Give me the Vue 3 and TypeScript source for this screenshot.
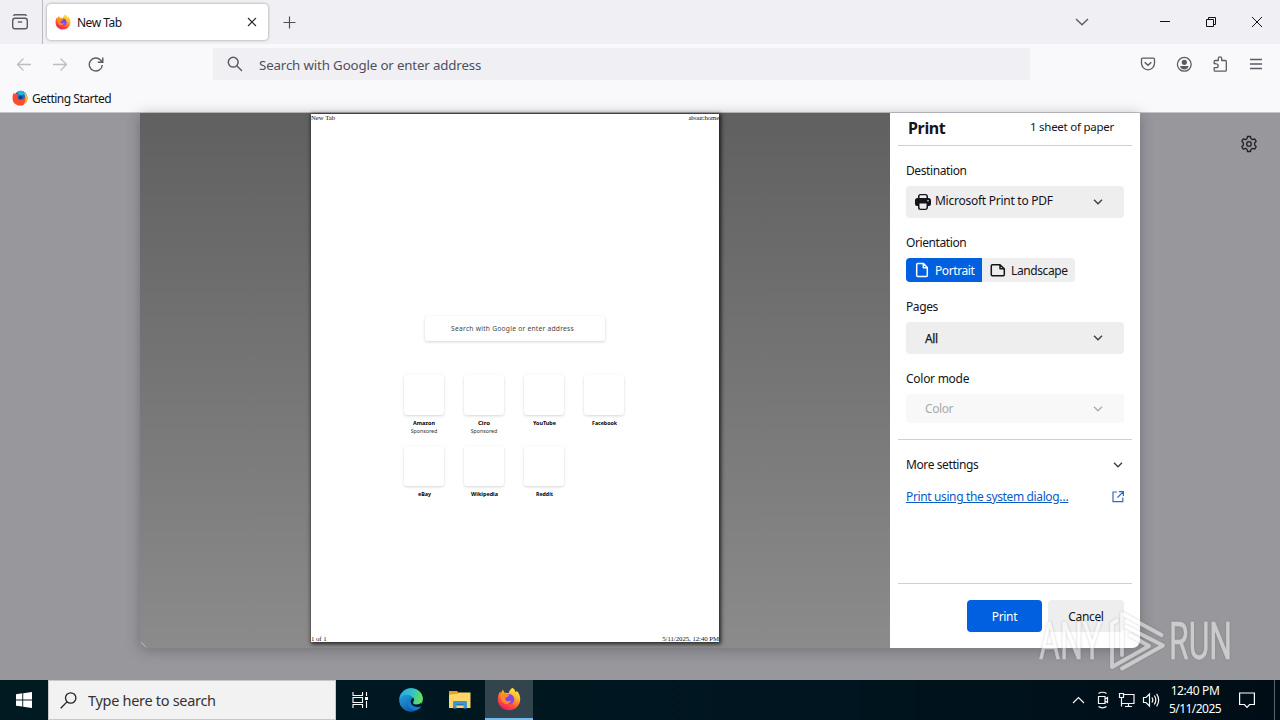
<script setup lang="ts">
interface Tile { name: string; sponsored?: boolean; w: number }

const tiles: Tile[] = [
  { name: 'Amazon', sponsored: true, w: 22 },
  { name: 'Ciro', sponsored: true, w: 12 },
  { name: 'YouTube', w: 23 },
  { name: 'Facebook', w: 25 },
  { name: 'eBay', w: 13 },
  { name: 'Wikipedia', w: 27 },
  { name: 'Reddit', w: 17 },
]
</script>

<template>
  <div class="screen">
    <svg class="defs" width="0" height="0" aria-hidden="true">
      <defs>
        <linearGradient id="ffBody" x1="0.8" y1="0" x2="0.25" y2="1">
          <stop offset="0" stop-color="#fff04a" />
          <stop offset="0.35" stop-color="#ffb428" />
          <stop offset="0.65" stop-color="#ff5634" />
          <stop offset="1" stop-color="#e8156a" />
        </linearGradient>
        <linearGradient id="edgeBlue" x1="0" y1="0" x2="0.6" y2="1">
          <stop offset="0" stop-color="#2bb3e8" />
          <stop offset="1" stop-color="#0c59a4" />
        </linearGradient>
        <linearGradient id="edgeTop" x1="0" y1="0.3" x2="1" y2="0.5">
          <stop offset="0" stop-color="#27a9e3" />
          <stop offset="0.55" stop-color="#36c5c0" />
          <stop offset="1" stop-color="#6be04f" />
        </linearGradient>
        <symbol id="firefox" viewBox="0 0 24 24">
          <path fill="url(#ffBody)" d="M15.3 0.8c2 1.1 2.9 2.9 3.3 4.5 0.8-0.3 1-1 1.1-1.6 2.400 2.300 3.600 5.400 3.500 8.800C23 18.600 18.200 23.300 12 23.300 5.600 23.300 0.800 18.500 0.800 12.300c0-3.300 1-5.800 2.600-7.800l0.500 2 1.800-4 1.900 3.200c1.400-0.200 2.700 0 3.900 0.600 0.700-2.200 1.900-4.100 3.800-5.500z" />
          <circle cx="12.300" cy="12.200" r="5" fill="#8147e6" />
          <path fill="#ff8a25" d="M3.400 8.200c2.400-1.800 5-2.100 7.600-0.700 1.500 0.700 1.300 1.500-0.300 2.200l-2.200 1c-0.500 1.200 0 2.500 1.200 3.200 1.700 1 3.300-0.200 4.700-0.300-0.900 2.200-3 3.600-5.400 3.300C5.400 16.400 3.100 13 3.400 8.200z" />
        </symbol>
        <symbol id="firefoxOld" viewBox="0 0 24 24">
          <circle cx="13" cy="11" r="9.800" fill="#1c6fc4" />
          <path fill="#22b8dd" d="M8 3c4-3 9-2 12 2l-5 3-5-1z" />
          <path fill="#ff4a2b" d="M3.200 3.600 C3.300 5 3.600 5.600 5 6 C7.500 5.600 9 6.500 9.400 7.600 L8 10.500 C8.500 15 12 16 15 14 C16 13.500 17 14 16.500 15 C19 13 20 10 20 8 L19 5 C22 7 23.300 10 23.200 13 C22.600 19.500 17.500 23.300 12 23.300 C5.500 23.300 0.800 18.500 0.800 12.300 C0.800 8.500 1.600 5.800 3.200 3.600Z" />
          <path fill="#ffc22e" d="M18 3.500c4 2.800 5.400 5.800 5.200 9.800-0.400 4.200-3 7.300-6.200 8.800C20 18 21 14 19.500 9z" />
          <circle cx="13" cy="11" r="2.800" fill="#173a75" />
        </symbol>
      </defs>
    </svg>

    <header class="tabs">
      <div class="view-btn">
        <svg width="18" height="18" viewBox="0 0 18 18" fill="none" stroke="#5b5b66" stroke-width="1.400">
          <path d="M4 1.700h10c.8 0 1.400.5 1.600 1.200" /><path d="M4 1.700c-.8 0-1.400.5-1.600 1.200" />
          <rect x="1.700" y="5.200" width="14.600" height="10.600" rx="2.200" /><path d="M6.800 9h4.400" />
        </svg>
      </div>
      <div class="tab">
        <svg class="fav" width="16" height="16"><use href="#firefox" /></svg>
        <span class="t tab-title">New Tab</span>
        <svg class="close" width="10" height="10" viewBox="0 0 10 10" stroke="#2a2a33" stroke-width="1.100"><path d="M1 1l8 8M9 1L1 9" /></svg>
      </div>
      <svg class="plus" width="13" height="13" viewBox="0 0 13 13" stroke="#4f4f59" stroke-width="1.200"><path d="M6.500 0.500v12M0.500 6.500h12" /></svg>
      <svg class="alltabs" width="14" height="8" viewBox="0 0 14 8" fill="none" stroke="#5b5b66" stroke-width="1.400"><path d="M1 1l6 5.700L13 1" /></svg>
      <svg class="winbtns" width="104" height="12" viewBox="0 0 104 12" fill="none" stroke="#111" stroke-width="1">
        <path d="M0 5.500h10" /><path d="M46.500 3.500h7v7h-7zM48.500 3.500v-2h7v7h-2" /><path d="M92 1l10 10M102 1l-10 10" />
      </svg>
    </header>

    <div class="nav">
      <svg class="arrow left" width="16" height="14" viewBox="0 0 16 14" fill="none" stroke="#bcbcc3" stroke-width="1.300"><path d="M15 7.500H1.500M7.500 1.500l-6 6 6 6" /></svg>
      <svg class="arrow" width="16" height="14" viewBox="0 0 16 14" fill="none" stroke="#bcbcc3" stroke-width="1.300"><path d="M1 7.500h13.500M8.500 1.500l6 6-6 6" /></svg>
      <svg class="reload" width="16" height="16" viewBox="0 0 16 16" fill="none" stroke="#5b5b66" stroke-width="1.400"><path d="M14.300 9A6.500 6.500 0 1 1 12.500 4L14.500 6M9.800 6.200h5V1.500" /></svg>
      <div class="urlbar">
        <svg width="16" height="16" viewBox="0 0 16 16" fill="none" stroke="#5b5b66" stroke-width="1.500"><circle cx="6.200" cy="6.200" r="4.900" /><path d="M9.800 9.800l5.200 5.200" /></svg>
        <span class="t">Search with Google or enter address</span>
      </div>
      <div class="tools">
        <svg width="16" height="16" viewBox="0 0 16 16" fill="none" stroke="#5b5b66" stroke-width="1.300"><path d="M2.800 2.200h10.400c.8 0 1.300.5 1.300 1.300v3.800a6.500 6.500 0 0 1-13 0V3.500c0-.8.500-1.300 1.300-1.300z" /><path d="M4.700 6.200L8 9.300l3.300-3.100" stroke-width="1.500" /></svg>
        <svg width="16" height="16" viewBox="0 0 16 16"><circle cx="8.300" cy="8.300" r="6.900" fill="none" stroke="#5b5b66" stroke-width="1.300" /><circle cx="8.300" cy="6.300" r="2.600" fill="#5b5b66" /><path d="M4.100 10h8.400c0 2.300-2 3.400-4.200 3.400S4.100 12.300 4.100 10z" fill="#5b5b66" /></svg>
        <svg width="16" height="16" viewBox="0 0 16 16" fill="none" stroke="#5b5b66" stroke-width="1.300" stroke-linejoin="round"><path d="M2.200 7.500V5.500q0-1 1-1h3.100V2.600a1.700 1.700 0 0 1 3.400 0v1.900h3.600q1 0 1 1v8.700q0 1-1 1H3.200q-1 0-1-1v-2.500h2.100a1.900 1.900 0 0 0 0-3.800z" /></svg>
        <svg width="16" height="16" viewBox="0 0 16 16" stroke="#5b5b66" stroke-width="1.300"><path d="M2 3.500h12M2 8h12M2 12.500h12" /></svg>
      </div>
    </div>

    <div class="bookmarks">
      <svg width="16" height="16"><use href="#firefoxOld" /></svg>
      <span class="t">Getting Started</span>
    </div>

    <main class="content">
      <section class="dialog">
        <div class="preview">
          <div class="sheet">
            <div class="sheet-row"><span>New Tab</span><span class="about">about:home</span></div>
            <div class="sheet-body">
              <div class="sheet-search"><span>Search with Google or enter address</span></div>
              <div class="tiles">
                <div v-for="tile in tiles" :key="tile.name" class="tile">
                  <div class="box"></div>
                  <svg class="label" :width="tile.w" height="8"><text x="0" y="6" :textLength="tile.w" lengthAdjust="spacingAndGlyphs">{{ tile.name }}</text></svg>
                  <span v-if="tile.sponsored" class="spons">Sponsored</span>
                </div>
              </div>
            </div>
            <div class="sheet-row foot"><span>1 of 1</span><span>5/11/2025, 12:40 PM</span></div>
          </div>
          <svg class="corner" width="8" height="8" viewBox="0 0 8 8" stroke="#bbb" stroke-width="1"><path d="M1 2l5 5" /></svg>
        </div>
        <aside class="panel">
          <div class="p-head"><h1>Print</h1><span class="t sheets">1 sheet of paper</span></div>
          <div class="p-body">
            <label class="t dest">Destination</label>
            <div class="select s1">
              <svg width="16" height="16" viewBox="0 0 16 16"><path fill="#15141a" d="M3 2.500C3 1.100 4.100 0 5.500 0h5C11.900 0 13 1.100 13 2.500V4h.5A2.500 2.500 0 0 1 16 6.500V10a2 2 0 0 1-2 2h-1v1.500c0 1.400-1.100 2.500-2.500 2.500h-5A2.500 2.500 0 0 1 3 13.500V12H2a2 2 0 0 1-2-2V6.500A2.500 2.500 0 0 1 2.500 4H3z" /><path fill="#eeeef0" d="M4.500 4V2.500q0-1.200 1.200-1.200h4.600q1.200 0 1.200 1.200V4zM4.500 9.500h7v4q0 1.200-1.200 1.200H5.700q-1.200 0-1.200-1.200z" /><circle cx="13" cy="6.700" r=".8" fill="#eee" /></svg>
              <span class="t">Microsoft Print to PDF</span>
              <svg class="chev" width="10" height="6" viewBox="0 0 10 6"><path d="M1 .8l4 4 4-4" /></svg>
            </div>
            <label class="t orient">Orientation</label>
            <div class="seg">
              <div class="on"><svg width="16" height="16" viewBox="0 0 16 16" fill="none" stroke="#fff" stroke-width="1.500" stroke-linejoin="round"><path d="M3.700 1.500h5.800l3.800 4v8c0 .7-.4 1-1 1H3.700c-.6 0-1-.3-1-1v-11c0-.7.4-1 1-1zM9.300 1.500V5.700h4" /></svg><span class="t">Portrait</span></div>
              <div class="off"><svg width="16" height="16" viewBox="0 0 16 16" fill="none" stroke="#15141a" stroke-width="1.500" stroke-linejoin="round"><path d="M2.300 2.700h7.700l4.300 4v6c0 .7-.4 1-1 1h-11c-.6 0-1-.3-1-1v-9c0-.7.400-1 1-1zM10 2.700V6.700h4.300" /></svg><span class="t">Landscape</span></div>
            </div>
            <label class="t pages">Pages</label>
            <div class="select s2"><span class="t">All</span><svg class="chev" width="10" height="6" viewBox="0 0 10 6"><path d="M1 .8l4 4 4-4" /></svg></div>
            <label class="t cmode">Color mode</label>
            <div class="select s3"><span class="t">Color</span><svg class="chev" width="10" height="6" viewBox="0 0 10 6"><path d="M1 .8l4 4 4-4" /></svg></div>
          </div>
          <div class="p-more">
            <div class="line"><span class="t more">More settings</span><svg class="chev" width="10" height="6" viewBox="0 0 10 6"><path d="M1 .8l4 4 4-4" /></svg></div>
            <div class="line link"><span class="t sys">Print using the system dialog…</span><svg width="12" height="12" viewBox="0 0 12 12" fill="none" stroke="#3568c0" stroke-width="1.200"><path d="M5 1H1v9.700h9.800V6.500M7 .6h4.400V5M11.200 .8L5.500 6.500" /></svg></div>
          </div>
          <div class="p-foot"><button class="primary"><span class="t">Print</span></button><button><span class="t">Cancel</span></button></div>
        </aside>
      </section>
      <svg class="gear" width="18" height="18" viewBox="0 0 18 18" fill="none" stroke="#202026" stroke-width="1.300" stroke-linejoin="round"><path d="M7.500 1.500h3l.5 2.200 1.500.9 2.200-.8 1.500 2.600L14.600 8v2l1.600 1.600-1.500 2.600-2.200-.8-1.500.9-.5 2.200h-3L7 14.300l-1.500-.9-2.200.8-1.500-2.600L3.400 10V8L1.800 6.400l1.500-2.600 2.200.8L7 3.700z" /><circle cx="9" cy="9" r="2.300" /></svg>
    </main>

    <svg class="watermark" width="230" height="72" viewBox="0 0 230 72">
      <g fill="#fff" stroke="#fff" stroke-width=".5">
        <text x="3" y="52" textLength="63" lengthAdjust="spacingAndGlyphs">ANY</text>
        <text x="133" y="52" textLength="63" lengthAdjust="spacingAndGlyphs">RUN</text>
      </g>
      <path fill="none" stroke="#fff" stroke-width="3.800" stroke-linejoin="round" stroke-linecap="round" d="M81 13.500l-5 3V60l37-21-19-11M86 48V6.500L125.500 28M86 61.500l41-23L90 19.500" />
    </svg>

    <footer class="taskbar">
      <div class="start"><svg width="16" height="16" viewBox="0 0 16 16" fill="#fff"><path d="M0 2.200l6.300-.9v6.200H0zM7.200 1.200L16 0v7.500H7.200zM0 8.400h6.300v6.200L0 13.700zM7.200 8.400H16V16l-8.800-1.300z" /></svg></div>
      <div class="search">
        <svg width="17" height="17" viewBox="0 0 17 17" fill="none" stroke="#222" stroke-width="1.300"><circle cx="10.700" cy="6" r="5.200" /><path d="M7 9.900L.7 16.300" /></svg>
        <span class="t">Type here to search</span>
      </div>
      <div class="app"><svg width="16" height="16" viewBox="0 0 16 16" fill="none" stroke="#fff" stroke-width="1.100"><path d="M1 0v3.500h9.500V0M1 5.500h9.500v5H1zM1 16v-3.500h9.500V16M14.500 0v4M14.500 9v7" /><path d="M13 5h3v3h-3z" fill="#fff" stroke="none" /></svg></div>
      <div class="app edge"><svg width="24" height="24" viewBox="0 0 24 24"><circle cx="12" cy="12" r="11.800" fill="url(#edgeBlue)" /><path fill="url(#edgeTop)" d="M.4 10.500C1.500 4.500 6.500.2 12 .2 18.700.2 23.800 5 23.800 10.500c0 4-3 6.200-6.300 6.200-2.800 0-4-1.200-3.500-2.200.7-1 .9-1.600.9-2.500C14.900 9.500 12 6.700 8 6.700c-3.300 0-6.200 1.500-7.600 3.800z" /><path fill="#001a22" d="M14.500 9.800c1 1.800.3 3.200-.5 4.600-.3 1.700 3.600 3.400 8 .8l1.500 2c-4 3.500-11 1.400-11.700-3.200-.2-2 1-3.500 2.700-4.200z" /><path fill="#147fd0" d="M8.500 12c-1 5 2.500 10 8 10 2.300 0 4.500-1.600 5.500-3.600-4 1.800-9.800.6-11.500-4-.5-1.500 0-3 .7-4.100-1.200 0-2.400.8-2.700 1.700z" /></svg></div>
      <div class="app folder"><svg width="22" height="20" viewBox="0 0 22 20"><path fill="#e9a11c" d="M0 1h8l2 2h11v3H0z" /><path fill="#ffd667" d="M0 4.500L8 4l2-1.500h11.500V18H0z" /><path fill="#3f93d2" d="M4 18.500v-6c0-1 .5-1.500 1.500-1.500h11c1 0 1.500.5 1.500 1.500v6h-3.500V15h-7v3.500z" /><path fill="#2a75b4" d="M7.500 14h7v1.500h-7z" /></svg></div>
      <div class="app active"><svg width="24" height="24"><use href="#firefox" /></svg></div>
      <div class="tray">
        <svg width="90" height="18" viewBox="0 0 90 18" fill="none" stroke="#f5f5f5" stroke-width="1.200">
          <path d="M1 12l5.500-5.500L12 12" />
          <path d="M26.500 5.500h6.500v7h-6.500zM33 8l2.500-1.500v5L33 10M26.500 2.500c2-1.700 6-1.700 8 0M26.500 15.500c2 1.700 6 1.700 8 0" />
          <path d="M52 3.500h10v9H50M56.500 12.500v3M53 15.500h7M47.500 2.500h4v4h-4zM49.500 6.500v9" />
          <path d="M71.500 6.500H74l3.500-3.500v12L74 11.500h-2.500zM80 6.500c1 1.500 1 3.500 0 5M82.300 4.500c2 3 2 6 0 9M84.600 2.800c2.700 4 2.700 8.500 0 12.500" />
        </svg>
        <div class="clock"><span class="t">12:40 PM</span><span class="t date">5/11/2025</span></div>
        <svg class="note" width="16" height="17" viewBox="0 0 16 17" fill="none" stroke="#fff" stroke-width="1.200"><path d="M.6 1h14.800v11.500h-4.800L8 15.300l-2.600-2.800H.6z" /></svg>
        <div class="peek"></div>
      </div>
    </footer>
  </div>
</template>

<style>
html, body { margin: 0; overflow: hidden; }
</style>

<style scoped>
* { box-sizing: border-box; }
.screen { position: relative; width: 1280px; height: 720px; overflow: hidden; display: flex; flex-direction: column; font-family: "Noto Sans", "Open Sans", sans-serif; color: #15141a; font-size: 12px; letter-spacing: -.4px; background: #f9f9fb; }
.defs { position: absolute; }
svg { display: block; flex: none; }
.t { white-space: nowrap; line-height: 16px; }
.tabs { height: 44px; flex: none; background: #f0f0f4; display: flex; align-items: center; }
.view-btn { width: 43px; height: 44px; padding: 13px 0 0 11px; border-right: 1px solid #babac1; }
.tab { width: 221px; height: 36px; margin-left: 4px; background: #fff; border-radius: 4px; box-shadow: 0 0 3px rgba(0,0,0,.4); display: flex; align-items: center; padding: 0 11px 0 8px; }
.tab-title { margin-left: 6px; flex: 1; padding-top: 2px; letter-spacing: -.5px; }
.plus { margin-left: 15px; }
.alltabs { margin-left: 779px; }
.winbtns { margin-left: 71px; }
.nav { height: 40px; flex: none; display: flex; align-items: center; padding-left: 16px; }
.arrow { margin-right: 20px; overflow: visible; }
.reload { margin-right: 109px; }
.nav .urlbar { width: 817px; height: 32px; background: #f0f0f4; display: flex; align-items: center; padding-left: 14px; gap: 16px; font-size: 13.300px; letter-spacing: -.15px; color: #4f4f59; }
.urlbar .t { padding-top: 2px; }
.tools { display: flex; gap: 20px; margin-left: 110px; }
.bookmarks { height: 29px; flex: none; display: flex; align-items: center; padding-left: 12px; gap: 4px; border-bottom: 1px solid #c4c4ca; letter-spacing: -.48px; }
.bookmarks .t { padding-top: 2px; }
.content { height: 567px; flex: none; background: #98979c; display: flex; padding-left: 140px; }
.dialog { width: 1000px; height: 535px; display: flex; border-radius: 0 0 8px 8px; box-shadow: 0 2px 14px rgba(40,40,50,.35); }
.preview { width: 750px; position: relative; background: linear-gradient(#606060, #8b8b8b); padding: 1px 0 0 171px; border-radius: 0 0 0 8px; }
.corner { position: absolute; left: 0; bottom: 0; }
.sheet { width: 408px; height: 528px; background: #fff; box-shadow: 1px 1px 4px 1px rgba(0,0,0,.75); display: flex; flex-direction: column; letter-spacing: 0; }
.sheet-row { display: flex; justify-content: space-between; font: 6.800px/8px "Liberation Serif", serif; color: #111; white-space: nowrap; letter-spacing: -.05px; }
.about { letter-spacing: -.16px; }
.foot { line-height: 7px; height: 7px; }
.sheet-body { flex: 1; padding: 194px 93px 0; }
.sheet-search { width: 180px; height: 25px; margin-left: 21px; border-radius: 3px; box-shadow: 0 1px 3px rgba(0,0,0,.18); font-size: 6.700px; display: flex; align-items: center; justify-content: center; padding-right: 5px; color: #444; white-space: nowrap; letter-spacing: .24px; }
.tiles { display: grid; grid-template-columns: repeat(4, 40px); column-gap: 20px; grid-auto-rows: 71px; margin-top: 34px; }
.tile { display: flex; flex-direction: column; align-items: center; }
.box { width: 40px; height: 40px; flex: none; border-radius: 3px; box-shadow: 0 1px 3px rgba(0,0,0,.16); }
.label { margin-top: 4px; overflow: visible; font-size: 6px; font-weight: 700; fill: #000; }
.spons { font-size: 5.300px; line-height: 8px; color: #333; }
.panel { width: 250px; background: #fff; border-radius: 0 0 8px 0; padding: 0 8px; display: flex; flex-direction: column; }
.p-head { height: 33px; border-bottom: 1px solid #d0d0d4; display: flex; justify-content: space-between; padding: 0 18px 0 10px; }
h1 { font-size: 16px; line-height: 30px; margin: 0; font-weight: 700; letter-spacing: -.35px; }
.sheets { padding-top: 6px; font-size: 11.500px; letter-spacing: -.25px; }
.p-body { padding: 17px 8px 16px; display: flex; flex-direction: column; border-bottom: 1px solid #d0d0d4; height: 294px; }
label { display: block; flex: none; height: 16px; }
.select { flex: none; width: 218px; height: 32px; margin: 7px 0 17px; border-radius: 4px; background: #eeeeef; display: flex; align-items: center; padding: 0 21px 0 9px; gap: 4px; }
.select .t { flex: 1; }
.s1 .t { letter-spacing: -.26px; padding-bottom: 2px; }
.chev { fill: none; stroke: #3a3a42; stroke-width: 1.300; }
.s2, .s3 { padding-left: 19px; }
.s2 { -webkit-text-stroke: .25px #15141a; }
.s2 .t { padding-top: 1px; }
.cmode { letter-spacing: -.27px; }
.s3 { height: 29px; background: #f8f8f8; color: #aaa; margin-bottom: 0; }
.s3 .chev { stroke: #aaa; }
.seg { display: flex; height: 24px; margin: 7px 0 17px; flex: none; }
.seg > div { display: flex; align-items: center; gap: 5px; padding-left: 8px; }
.seg .t { padding-top: 1px; }
.on { width: 76px; background: #0060df; color: #fff; border-radius: 4px 0 0 4px; }
.off { width: 93px; background: #eeeeef; border-radius: 0 4px 4px 0; }
.p-more { padding: 17px 8px 0; flex: 1; }
.line { display: flex; justify-content: space-between; align-items: center; height: 16px; margin-bottom: 16px; }
.line > .chev { margin-right: 1px; }
.sys { color: #0a5bc4; text-decoration: underline; letter-spacing: -.37px; }
.p-foot { height: 65px; border-top: 1px solid #d0d0d4; display: flex; gap: 6px; padding: 16px 8px 0 69px; }
button { width: 76px; height: 32px; border: 0; padding: 0; border-radius: 4px; background: #eeeeef; color: #15141a; font: inherit; letter-spacing: -.35px; }
.primary { width: 75px; background: #0060df; color: #fff; }
.gear { margin: 22px 0 0 100px; }
.watermark { position: absolute; left: 1036px; top: 607px; opacity: .5; filter: drop-shadow(0 0 1px rgba(80,80,80,.6)); font-family: Roboto, sans-serif; font-size: 52px; letter-spacing: 0; }
.taskbar { height: 40px; flex: none; display: flex; background: linear-gradient(90deg, #001a22 0, #00151f 65%, #000d17 100%); }
.start { width: 48px; display: grid; place-items: center; }
.search { width: 288px; height: 40px; background: #f2f2f2; border: 1px solid #c8c8c8; display: flex; align-items: center; gap: 11px; padding-left: 11px; font-size: 14.500px; letter-spacing: -.3px; color: #333; }
.app { width: 48px; display: grid; place-items: center; }
.edge { width: 54px; }
.folder { width: 47px; padding-right: 3px; }
.active { width: 48px; background: #32444d; border-bottom: 2px solid #76b9ed; }
.tray { flex: 1; display: flex; align-items: center; justify-content: flex-end; color: #fff; }
.clock { width: 62px; margin-left: 2px; display: flex; flex-direction: column; align-items: center; gap: 2px; }
.date { letter-spacing: -.55px; }
.note { margin: 0 19px 0 13px; }
.peek { width: 6px; height: 40px; border-left: 1px solid #58636b; }
</style>
